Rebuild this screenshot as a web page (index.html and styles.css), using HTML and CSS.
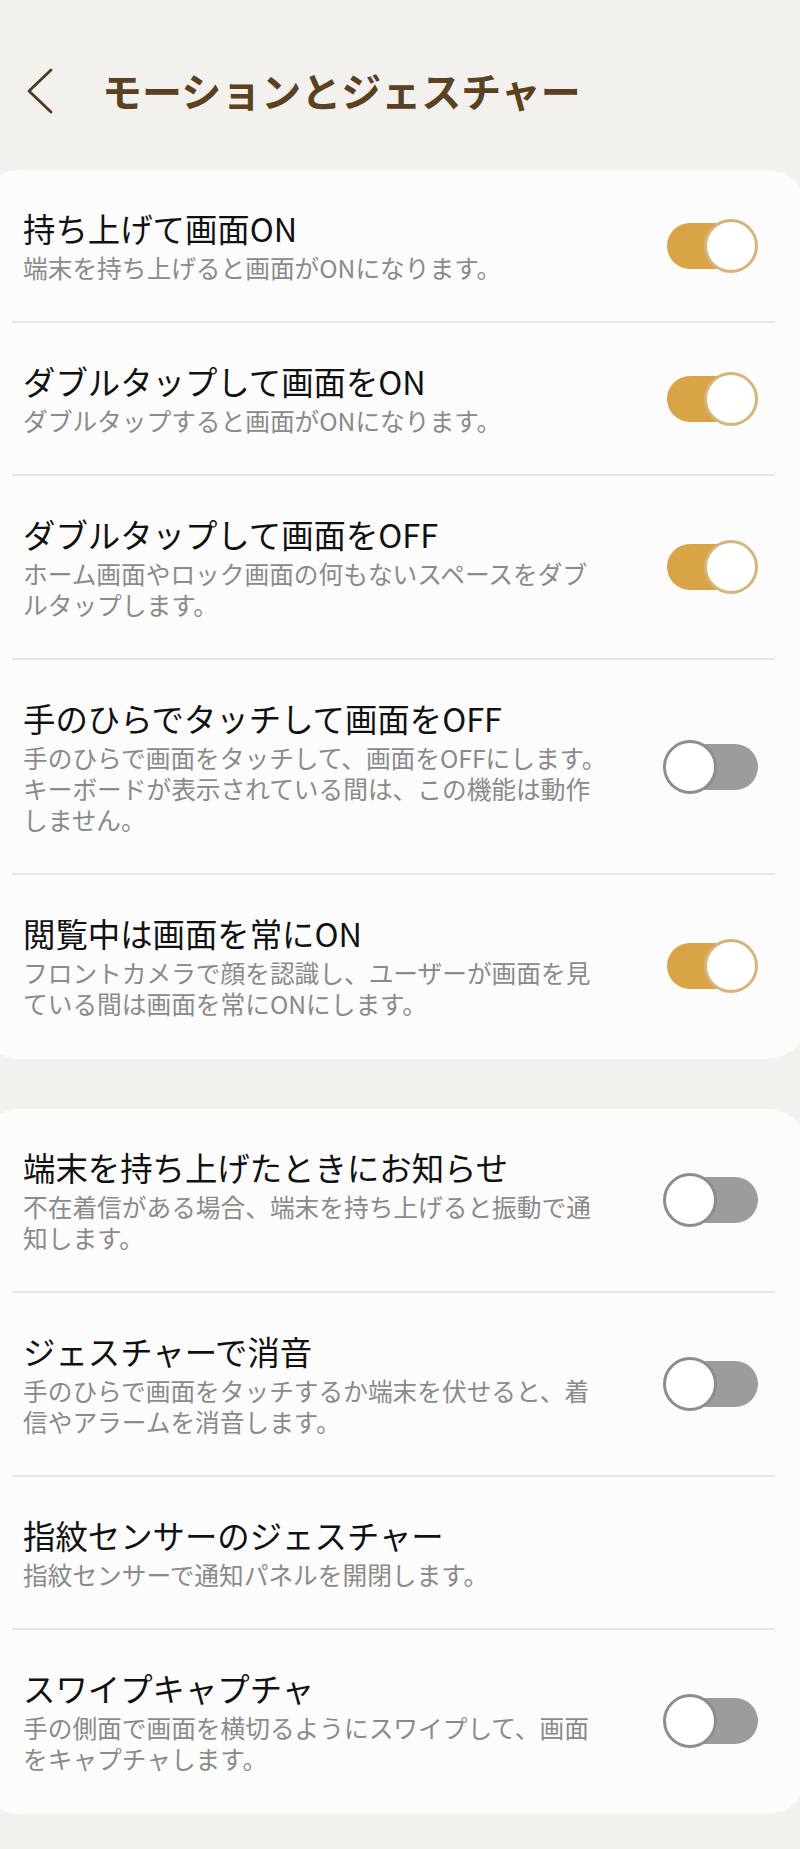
FILE: index.html
```html
<!DOCTYPE html>
<html lang="ja">
<head>
    <meta charset="UTF-8">
    <meta name="viewport" content="width=device-width, initial-scale=1.0">
    <title>モーションとジェスチャー</title>
    <link rel="stylesheet" href="styles.css">
</head>
<body>

    <header class="kopf">
        <svg class="zurueck" width="28" height="48" viewBox="0 0 28 48">
            <path d="M25 3 L3 24 L25 45" fill="none" stroke="#4f3a1d" stroke-width="2.8" stroke-linecap="round" stroke-linejoin="round"/>
        </svg>
        <h1>モーションとジェスチャー</h1>
    </header>

    <section class="karte">
        <div class="zeile">
            <div class="text">
                <div class="titel">持ち上げて画面ON</div>
                <div class="info">端末を持ち上げると画面がONになります。</div>
            </div>
            <span class="schalter an"><span class="knopf"></span></span>
        </div>
        <div class="zeile">
            <div class="text">
                <div class="titel">ダブルタップして画面をON</div>
                <div class="info">ダブルタップすると画面がONになります。</div>
            </div>
            <span class="schalter an"><span class="knopf"></span></span>
        </div>
        <div class="zeile">
            <div class="text">
                <div class="titel">ダブルタップして画面をOFF</div>
                <div class="info">ホーム画面やロック画面の何もないスペースをダブルタップします。</div>
            </div>
            <span class="schalter an"><span class="knopf"></span></span>
        </div>
        <div class="zeile">
            <div class="text">
                <div class="titel">手のひらでタッチして画面をOFF</div>
                <div class="info">手のひらで画面をタッチして、画面をOFFにします。キーボードが表示されている間は、この機能は動作しません。</div>
            </div>
            <span class="schalter"><span class="knopf"></span></span>
        </div>
        <div class="zeile">
            <div class="text">
                <div class="titel">閲覧中は画面を常にON</div>
                <div class="info">フロントカメラで顔を認識し、ユーザーが画面を見ている間は画面を常にONにします。</div>
            </div>
            <span class="schalter an"><span class="knopf"></span></span>
        </div>
    </section>

    <section class="karte">
        <div class="zeile">
            <div class="text">
                <div class="titel">端末を持ち上げたときにお知らせ</div>
                <div class="info">不在着信がある場合、端末を持ち上げると振動で通知します。</div>
            </div>
            <span class="schalter"><span class="knopf"></span></span>
        </div>
        <div class="zeile">
            <div class="text">
                <div class="titel">ジェスチャーで消音</div>
                <div class="info">手のひらで画面をタッチするか端末を伏せると、着信やアラームを消音します。</div>
            </div>
            <span class="schalter"><span class="knopf"></span></span>
        </div>
        <div class="zeile">
            <div class="text">
                <div class="titel">指紋センサーのジェスチャー</div>
                <div class="info">指紋センサーで通知パネルを開閉します。</div>
            </div>
        </div>
        <div class="zeile">
            <div class="text">
                <div class="titel">スワイプキャプチャ</div>
                <div class="info">手の側面で画面を横切るようにスワイプして、画面をキャプチャします。</div>
            </div>
            <span class="schalter"><span class="knopf"></span></span>
        </div>
    </section>

</body>
</html>
```

FILE: styles.css
```css
:root {
    --hintergrund: #F2F1EE;
    --karte: #FCFCFC;
    --linie: #E7E7E7;
    --braun: #5A4121;
    --gold: #D8A446;
    --gold-rand: #D5B57B;
    --grau: #9C9C9C;
    --grau-rand: #8D8D8D;
}

body {
    margin: 0;
    background-color: var(--hintergrund);
    font-family: "Noto Sans CJK JP", "Noto Sans", sans-serif;
    color: #111111;
    overflow-x: hidden;
    padding-bottom: 42px;
}

.kopf {
    height: 170px;
    box-sizing: border-box;
    padding: 66px 0 0 26px;
    display: flex;
    align-items: flex-start;
}

.zurueck {
    margin-top: 1px;
}

h1 {
    margin: 0 0 0 48px;
    font-size: 40px;
    line-height: 48px;
    font-weight: 700;
    color: var(--braun);
}

.karte {
    background-color: var(--karte);
    border-radius: 44px;
    margin: 0 -10px 50px -24px;
}

.karte:last-child {
    margin-bottom: 0;
}

.zeile {
    margin: 0 35px 0 36px;
    padding: 38px 17px 38px 11px;
    border-bottom: 2px solid var(--linie);
    display: flex;
    align-items: center;
    justify-content: space-between;
}

.zeile:last-child {
    border-bottom: none;
    padding-bottom: 40px;
}

.text {
    width: 585px;
}

.titel {
    font-size: 32.4px;
    line-height: 40px;
}

.info {
    margin-top: 4px;
    font-size: 24.7px;
    line-height: 31px;
    color: #8A8A8A;
}

.schalter {
    position: relative;
    width: 95px;
    height: 54px;
    flex-shrink: 0;
}

.schalter::before {
    content: "";
    position: absolute;
    left: 4px;
    right: 0;
    top: 4px;
    height: 46px;
    border-radius: 23px;
    background-color: var(--grau);
}

.schalter.an::before {
    right: 6px;
    background-color: var(--gold);
}

.knopf {
    position: absolute;
    top: 0;
    left: 0;
    width: 54px;
    height: 54px;
    box-sizing: border-box;
    border: 3px solid var(--grau-rand);
    border-radius: 50%;
    background-color: #FFFFFF;
}

.schalter.an .knopf {
    left: auto;
    right: 0;
    border-color: var(--gold-rand);
}
```
